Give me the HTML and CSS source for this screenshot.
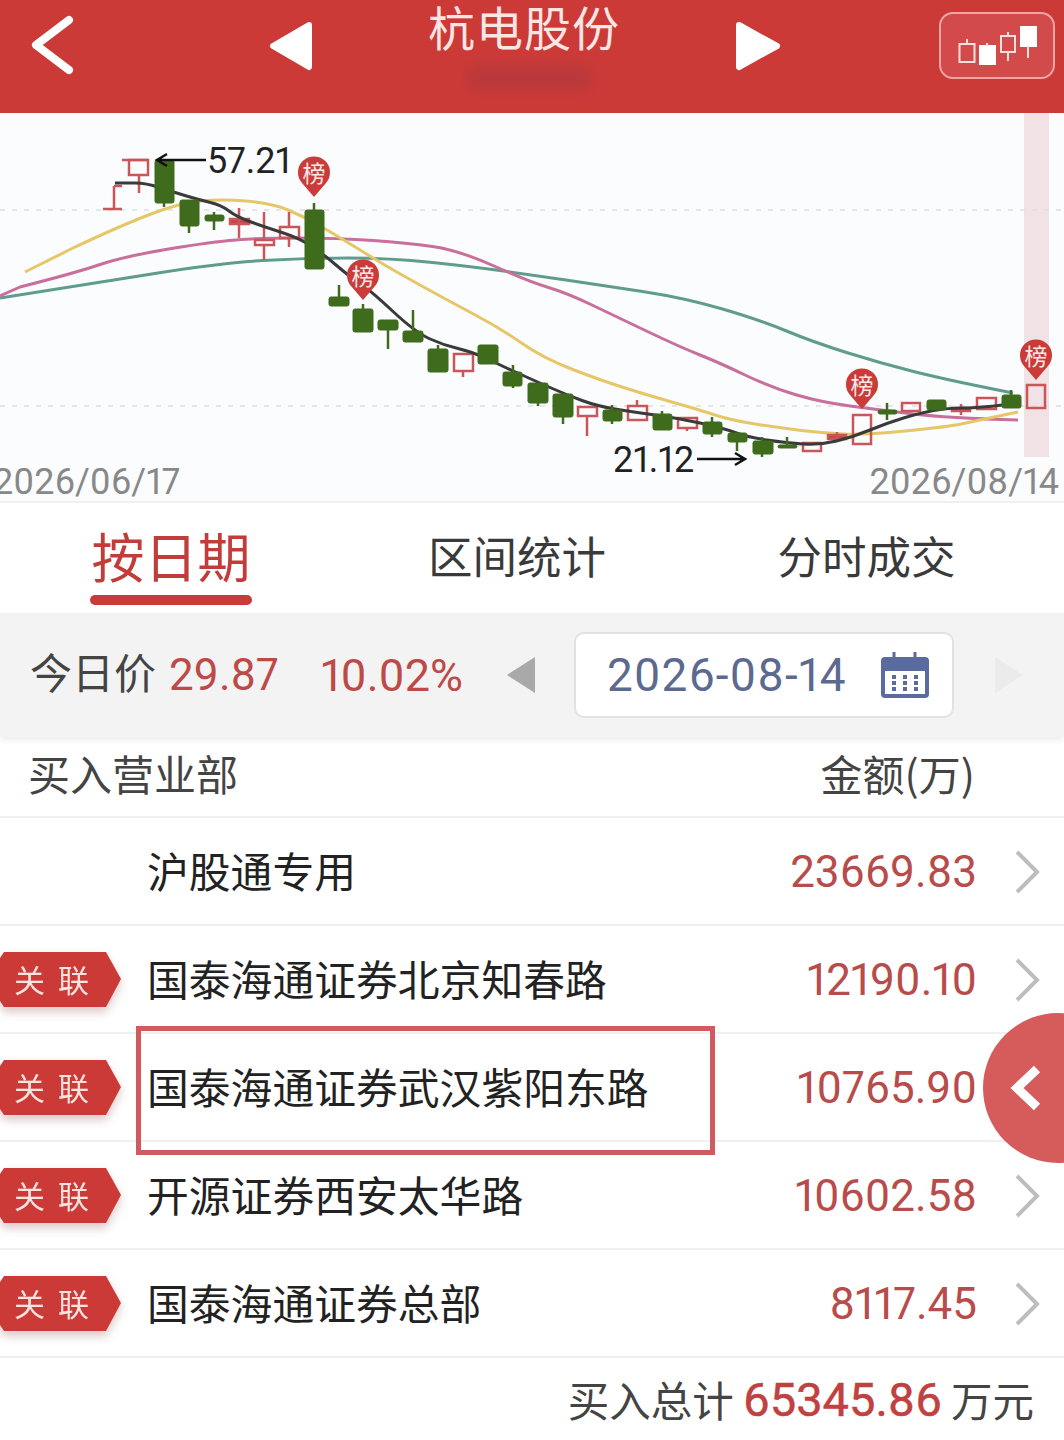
FILE: index.html
```html
<!DOCTYPE html>
<html lang="zh-CN">
<head>
    <meta charset="UTF-8">
    <meta name="viewport" content="width=device-width, initial-scale=1.0">
    <title>杭电股份</title>
    <link rel="stylesheet" href="styles.css">
</head>
<body>
    <div class="page">
        <header class="topbar">
            <svg class="topbar-icons" viewBox="0 0 1064 112">
                <path class="back" d="M69 20 L36 45 L69 70"/>
                <path class="arrow" d="M309 25 L273 46 L309 67 Z"/>
                <path class="arrow" d="M739 25 L777 46 L739 67 Z"/>
                <rect class="kbtn" x="940" y="13" width="114" height="65" rx="13"/>
                <g class="kicon">
                    <rect x="959.5" y="44" width="15" height="18"/><path d="M967 39 V44"/>
                    <rect class="solid" x="980" y="46" width="15" height="18"/><path d="M987 43 V46"/>
                    <rect x="1001" y="36" width="14" height="16"/><path d="M1008 32 V36 M1008 52 V61"/>
                    <rect class="solid" x="1021" y="27" width="15" height="19"/><path d="M1028 46 V58"/>
                </g>
            </svg>
            <h1 class="title">杭电股份</h1>
            <div class="code-blur"></div>
        </header>

        <section class="chart">
            <svg viewBox="0 113 1064 390">
                <rect class="today" x="1024" y="113" width="25" height="344"/>
                <line class="dash" x1="0" y1="210" x2="1064" y2="210"/>
                <line class="dash" x1="0" y1="406" x2="1064" y2="406"/>

                <path class="ma ma30" d="M0,298 Q95,283 158,273 Q221,263 263,260.5 Q305,258 347.5,258 Q390,258 432.5,262.5 Q475,267 503.5,271 Q532,275 566,280 Q600,285 642.5,291.5 Q685,298 722.5,309 Q760,320 786.5,331 Q813,342 846.5,352.5 Q880,363 913.5,371.5 Q947,380 1013,393"/>
                <path class="ma ma20" d="M0,296 L20,287 Q75,273 98.5,265 Q122,257 163,250 Q204,243 229.5,240.5 Q255,238 297,238 Q339,238 373,240.5 Q407,243 432.5,246.5 Q458,250 494,266 Q530,282 548.5,287.5 Q567,293 592,305 Q617,317 648.5,332 Q680,347 700,355 Q720,363 745,375 Q770,387 795,394.5 Q820,402 850,406 Q880,410 913.5,414 Q947,418 1018,420"/>
                <path class="ma ma10" d="M25,272 L73,248 Q122,225 151,214 Q180,203 200.5,201 Q221,199 246,201 Q271,203 288,210 Q305,217 322,227 Q339,237 356,247.5 Q373,258 383,264 Q393,270 420,285 Q447,300 473.5,314 Q500,328 521.5,343 Q543,358 571.5,369 Q600,380 623.5,387.5 Q647,395 673.5,402.5 Q700,410 715,415 Q730,420 755,424 Q780,428 801.5,430.5 Q823,433 843,434 Q863,435 905,431 Q947,427 963.5,423.5 Q980,420 1018,412"/>

                <g class="up">
                    <path d="M114 186 V209 M103 209 H122 M122 186 H114"/>
                    <rect x="129" y="160" width="19" height="15"/><path d="M139 175 V193 M122 160 H148"/>
                    <rect class="fill" x="230" y="219" width="19" height="5"/><path d="M239 208 V238"/>
                    <rect x="255" y="240" width="19" height="5"/><path d="M264 212 V240 M264 245 V260"/>
                    <rect x="280" y="227" width="19" height="11"/><path d="M289 212 V227 M289 238 V247"/>
                    <rect x="454" y="354" width="19" height="17"/><path d="M463 371 V377"/>
                    <rect x="578" y="407" width="19" height="9"/><path d="M587 416 V436"/>
                    <rect x="628" y="406" width="19" height="14"/><path d="M637 400 V406"/>
                    <rect x="678" y="418" width="19" height="10"/><path d="M687 428 V431"/>
                    <rect x="803" y="443" width="18" height="8"/>
                    <rect class="fill" x="828" y="435" width="18" height="4"/><path d="M837 432 V442"/>
                    <rect x="853" y="415" width="18" height="29"/>
                    <rect x="902" y="403" width="18" height="8"/>
                    <rect class="fill" x="952" y="408" width="18" height="3"/><path d="M961 404 V415"/>
                    <rect x="977" y="398" width="19" height="11"/>
                    <rect x="1027" y="385" width="18" height="23"/>
                </g>

                <path class="ma ma5" d="M115,183 L135,183 Q146,183 159.5,187.5 Q173,192 186.5,196 Q200,200 210.5,202.5 Q221,205 229,211 Q237,217 251,222 Q265,227 282,232.5 Q299,238 310.5,245.5 Q322,253 336,265 Q350,277 360,283.5 Q370,290 392.5,311 Q415,332 429,338.5 Q443,345 458,348.5 Q473,352 486.5,358.5 Q500,365 516.5,372.5 Q533,380 550,387.5 Q567,395 582,400.5 Q597,406 615,409 Q633,412 655,415 Q677,418 700,423 Q723,428 735,432.5 Q747,437 767,440 Q787,443 803.5,444 Q820,445 836.5,441 Q853,437 870,430 Q887,423 903.5,418 Q920,413 933.5,410.5 Q947,408 963.5,408 Q980,408 1020,403"/>

                <g class="down">
                    <rect x="155" y="160" width="19" height="43"/><path d="M164 203 V207"/>
                    <rect x="180" y="200" width="19" height="26"/><path d="M189 226 V233"/>
                    <rect x="205" y="215" width="19" height="6"/><path d="M214 212 V230"/>
                    <rect x="305" y="210" width="19" height="59"/><path d="M314 203 V210"/>
                    <rect x="329" y="297" width="20" height="9"/><path d="M339 285 V297"/>
                    <rect x="353" y="309" width="20" height="23"/><path d="M363 304 V309"/>
                    <rect x="378" y="320" width="20" height="10"/><path d="M388 330 V349"/>
                    <rect x="403" y="331" width="20" height="11"/><path d="M413 310 V331"/>
                    <rect x="428" y="349" width="20" height="23"/><path d="M438 345 V349"/>
                    <rect x="478" y="345" width="20" height="19"/>
                    <rect x="503" y="372" width="19" height="14"/><path d="M513 365 V388"/>
                    <rect x="528" y="383" width="20" height="20"/><path d="M538 403 V406"/>
                    <rect x="553" y="394" width="20" height="23"/><path d="M563 417 V424"/>
                    <rect x="603" y="410" width="19" height="11"/><path d="M612 405 V424"/>
                    <rect x="653" y="414" width="19" height="16"/><path d="M662 411 V414"/>
                    <rect x="703" y="422" width="19" height="12"/><path d="M712 417 V437"/>
                    <rect x="728" y="433" width="19" height="9"/><path d="M737 442 V451"/>
                    <rect x="753" y="441" width="20" height="13"/><path d="M762 437 V457"/>
                    <rect x="778" y="445" width="19" height="3"/><path d="M787 437 V445"/>
                    <rect x="878" y="410" width="19" height="4"/><path d="M887 403 V420"/>
                    <rect x="927" y="400" width="19" height="10"/>
                    <rect x="1002" y="395" width="19" height="13"/><path d="M1011 390 V395"/>
                </g>

                <g class="pin">
                    <path d="M314 197 L302 183 A16 16 0 1 1 326 183 Z"/><text x="314" y="182">榜</text>
                    <path d="M363 300 L351 286 A16 16 0 1 1 375 286 Z"/><text x="363" y="285">榜</text>
                    <path d="M862 409 L850 395 A16 16 0 1 1 874 395 Z"/><text x="862" y="394">榜</text>
                    <path d="M1036 380 L1024 366 A16 16 0 1 1 1048 366 Z"/><text x="1036" y="365">榜</text>
                </g>

                <path class="pointer" d="M206 160 H157 M167 154 L157 160 L167 166"/>
                <path class="pointer" d="M697 459 H745 M735 453 L745 459 L735 465"/>
                <text class="price" x="207" y="173">57.21</text>
                <text class="price" x="613" y="472">21.12</text>
                <text class="axis" x="-7" y="494">2026/06/17</text>
                <text class="axis" x="1059" y="494" text-anchor="end">2026/08/14</text>
            </svg>
        </section>

        <nav class="tabs">
            <div class="tab tab-on">按日期</div>
            <div class="tab">区间统计</div>
            <div class="tab">分时成交</div>
        </nav>

        <div class="datebar">
            <span class="today-label">今日价</span>
            <span class="today-price">29.87</span>
            <span class="today-pct">10.02%</span>
            <svg class="tri" viewBox="0 0 32 40"><path class="tri-dark" d="M30 2 L2 20 L30 38 Z"/></svg>
            <div class="datebox">
                <span class="date">2026-08-14</span>
                <svg class="cal" viewBox="0 0 48 46">
                    <rect class="cal-bg" x="0" y="5" width="48" height="41" rx="4"/>
                    <rect class="cal-paper" x="4" y="19" width="40" height="23"/>
                    <path class="cal-ring" d="M13 0 V10 M34 0 V10"/>
                    <g class="cal-dots">
                        <rect x="11" y="23" width="4" height="4"/><rect x="22" y="23" width="4" height="4"/><rect x="33" y="23" width="4" height="4"/>
                        <rect x="11" y="29" width="4" height="4"/><rect x="22" y="29" width="4" height="4"/><rect x="33" y="29" width="4" height="4"/>
                        <rect x="11" y="35" width="4" height="4"/><rect x="22" y="35" width="4" height="4"/><rect x="33" y="35" width="4" height="4"/>
                    </g>
                </svg>
            </div>
            <svg class="tri" viewBox="0 0 32 40"><path class="tri-light" d="M2 2 L30 20 L2 38 Z"/></svg>
        </div>

        <section class="list">
            <div class="list-head">
                <span>买入营业部</span>
                <span>金额(万)</span>
            </div>
            <div class="row">
                <div></div>
                <div class="name">沪股通专用</div>
                <div class="amount">23669.83</div>
                <svg class="more" viewBox="0 0 26 44"><path d="M3 2 L23 22 L3 42"/></svg>
            </div>
            <div class="row">
                <div class="tag"><span>关联</span></div>
                <div class="name">国泰海通证券北京知春路</div>
                <div class="amount">12190.10</div>
                <svg class="more" viewBox="0 0 26 44"><path d="M3 2 L23 22 L3 42"/></svg>
            </div>
            <div class="row">
                <div class="tag"><span>关联</span></div>
                <div class="name">国泰海通证券武汉紫阳东路</div>
                <div class="amount">10765.90</div>
                <svg class="more" viewBox="0 0 26 44"><path d="M3 2 L23 22 L3 42"/></svg>
            </div>
            <div class="row">
                <div class="tag"><span>关联</span></div>
                <div class="name">开源证券西安太华路</div>
                <div class="amount">10602.58</div>
                <svg class="more" viewBox="0 0 26 44"><path d="M3 2 L23 22 L3 42"/></svg>
            </div>
            <div class="row">
                <div class="tag"><span>关联</span></div>
                <div class="name">国泰海通证券总部</div>
                <div class="amount">8117.45</div>
                <svg class="more" viewBox="0 0 26 44"><path d="M3 2 L23 22 L3 42"/></svg>
            </div>
            <div class="mark"></div>
            <div class="float-btn">
                <svg viewBox="0 0 40 56"><path d="M30 9 L10 28 L30 47"/></svg>
            </div>
        </section>

        <footer class="total">
            <span>买入总计</span>
            <span class="total-num">65345.86</span>
            <span>万元</span>
        </footer>
    </div>
</body>
</html>
```

FILE: styles.css
```css
* {
    box-sizing: border-box;
}
body {
    margin: 0;
    background-color: #fff;
    font-family: Roboto, "Noto Sans CJK SC", sans-serif;
    font-variant-numeric: proportional-nums;
}
.page {
    width: 1064px;
    height: 1440px;
    overflow: hidden;
}

/* top bar */
.topbar {
    position: relative;
    height: 113px;
    background-color: #cc3a38;
    text-align: center;
}
.topbar-icons {
    position: absolute;
    left: 0;
    top: 0;
    width: 1064px;
    height: 112px;
}
.back {
    fill: none;
    stroke: #fff;
    stroke-width: 8;
    stroke-linecap: round;
    stroke-linejoin: round;
}
.arrow {
    fill: #fff;
    stroke: #fff;
    stroke-width: 6;
    stroke-linejoin: round;
}
.kbtn {
    fill: #d24a49;
    stroke: #f0a5a3;
    stroke-width: 2;
}
.kicon rect, .kicon path {
    fill: none;
    stroke: #fbe0dd;
    stroke-width: 2;
}
.kicon .solid {
    fill: #fff;
    stroke: #fff;
}
.title {
    margin: 0;
    position: relative;
    left: -8px;
    font-family: "Noto Sans CJK SC", sans-serif;
    font-size: 47px;
    line-height: 52px;
    font-weight: 400;
    letter-spacing: 1px;
    color: #fbe6e3;
}
.code-blur {
    position: absolute;
    left: 468px;
    top: 66px;
    width: 122px;
    height: 24px;
    background-color: #a8383d;
    opacity: 0.55;
    filter: blur(7px);
}

/* chart */
.chart {
    height: 390px;
    background-color: #fbfcfe;
    border-bottom: 2px solid #efefef;
}
.chart svg {
    display: block;
    width: 1064px;
    height: 390px;
}
.today {
    fill: #f0e2e5;
}
.dash {
    stroke: #dedede;
    stroke-width: 1.5;
    stroke-dasharray: 5 7;
}
.ma {
    fill: none;
    stroke-width: 3;
    stroke-linejoin: round;
}
.ma5 {
    stroke: #3a3a3a;
}
.ma10 {
    stroke: #e6c768;
}
.ma20 {
    stroke: #c86f9c;
}
.ma30 {
    stroke: #5f9c8e;
}
.up rect, .up path {
    fill: none;
    stroke: #c9575a;
    stroke-width: 2.5;
}
.up .fill {
    fill: #c9424a;
}
.down rect {
    fill: #3f6b1c;
    stroke: #3f6b1c;
    stroke-width: 1;
    rx: 2;
}
.down path {
    fill: none;
    stroke: #3f6b1c;
    stroke-width: 2.5;
}
.pin path {
    fill: #c93c3a;
}
.pin text {
    font-family: "Noto Sans CJK SC", sans-serif;
    font-size: 23px;
    fill: #fde8e6;
    text-anchor: middle;
}
.pointer {
    fill: none;
    stroke: #111;
    stroke-width: 2.5;
}
.price {
    font-size: 36px;
    fill: #222;
}
.axis {
    font-size: 36px;
    fill: #888;
}

/* tabs */
.tabs {
    display: flex;
    height: 110px;
    background-color: #fff;
}
.tab {
    flex: 0 0 349px;
    padding-top: 21px;
    text-align: center;
    font-family: "Noto Sans CJK SC", sans-serif;
    font-size: 44.5px;
    line-height: 62px;
    color: #3a3a3a;
}
.tabs .tab:first-child {
    flex: 0 0 342px;
}
.tabs .tab:nth-child(2) {
    flex: 0 0 350px;
}
.tab-on {
    position: relative;
    padding-top: 19px;
    font-size: 53px;
    line-height: 66px;
    color: #c23c3a;
}
.tab-on::after {
    content: "";
    position: absolute;
    left: 90px;
    bottom: 8px;
    width: 162px;
    height: 10px;
    border-radius: 5px;
    background-color: #c93a3a;
}

/* date bar */
.datebar {
    display: flex;
    align-items: center;
    height: 124px;
    padding-left: 30px;
    background-color: #f3f3f3;
    box-shadow: 0 3px 6px rgba(0, 0, 0, 0.08);
    position: relative;
    font-size: 44px;
}
.today-label {
    font-family: "Noto Sans CJK SC", sans-serif;
    font-size: 42px;
    color: #444;
    width: 139px;
    padding-bottom: 9px;
}
.today-price {
    color: #bd4a48;
    width: 152px;
}
.today-pct {
    color: #bd4a48;
    width: 184px;
    font-size: 45px;
    white-space: nowrap;
}
.tri {
    width: 32px;
    height: 40px;
    flex: none;
}
.tri-dark {
    fill: #a9a9a9;
}
.tri-light {
    fill: #ebebeb;
}
.datebox {
    display: flex;
    align-items: center;
    justify-content: space-between;
    width: 380px;
    height: 86px;
    margin: 0 39px 0 37px;
    padding: 0 23px 0 31px;
    background-color: #fff;
    border: 2px solid #e2e2e2;
    border-radius: 10px;
}
.date {
    color: #5c6a8f;
    font-size: 46px;
    letter-spacing: 1px;
}
.cal {
    width: 48px;
    height: 46px;
}
.cal-bg {
    fill: #5a6c9f;
}
.cal-paper {
    fill: #fff;
}
.cal-ring {
    fill: none;
    stroke: #5a6c9f;
    stroke-width: 3;
}
.cal-dots rect {
    fill: #5a6c9f;
}

/* list */
.list {
    position: relative;
}
.list-head {
    display: flex;
    justify-content: space-between;
    align-items: center;
    height: 81px;
    padding: 0 89px 8px 28px;
    border-bottom: 2px solid #f0f0f0;
    font-family: "Noto Sans CJK SC", sans-serif;
    font-size: 42px;
    color: #444;
}
.row {
    display: grid;
    grid-template-columns: 147px 1fr auto 87px;
    align-items: center;
    height: 108px;
    border-bottom: 2px solid #f0f0f0;
}
.tag {
    width: 121px;
    height: 55px;
    margin-top: 1px;
    filter: drop-shadow(0 5px 5px rgba(120, 30, 30, 0.25));
}
.tag span {
    display: block;
    height: 55px;
    padding-left: 14px;
    background-color: #cc3a38;
    clip-path: polygon(0 6px, 4px 0, 106px 0, 121px 27px, 106px 55px, 4px 55px, 0 49px);
    font-family: "Noto Sans CJK SC", sans-serif;
    font-size: 31px;
    line-height: 54px;
    letter-spacing: 13px;
    color: #fde3df;
}
.name {
    margin-bottom: 2px;
    font-family: "Noto Sans CJK SC", sans-serif;
    font-size: 41.8px;
    color: #222;
    white-space: nowrap;
}
.amount {
    margin-top: 2px;
    font-size: 44px;
    color: #b84c4a;
}
.more {
    width: 26px;
    height: 44px;
    margin: 2px 0 0 37px;
}
.more path {
    fill: none;
    stroke: #bdbdbd;
    stroke-width: 4;
}
.mark {
    position: absolute;
    left: 136px;
    top: 289px;
    width: 579px;
    height: 129px;
    border: 5px solid #cf5b5e;
}
.float-btn {
    position: absolute;
    left: 983px;
    top: 276px;
    width: 150px;
    height: 150px;
    border-radius: 50%;
    background-color: #d65c5c;
}
.float-btn svg {
    position: absolute;
    left: 24px;
    top: 47px;
    width: 40px;
    height: 56px;
}
.float-btn path {
    fill: none;
    stroke: #fff;
    stroke-width: 9;
}

/* total */
.total {
    display: flex;
    justify-content: flex-end;
    align-items: center;
    gap: 9px;
    height: 82px;
    padding-right: 30px;
    font-family: "Noto Sans CJK SC", sans-serif;
    font-size: 41.5px;
    color: #444;
}
.total-num {
    font-family: Roboto, sans-serif;
    font-size: 47px;
    color: #c0413f;
    -webkit-text-stroke: 0.5px #c0413f;
}
```
